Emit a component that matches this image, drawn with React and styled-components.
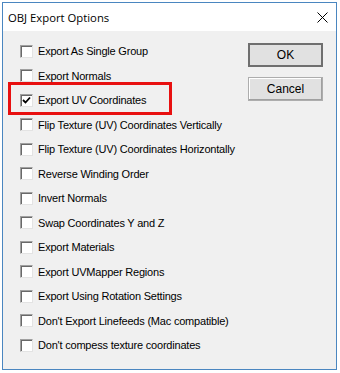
import React from "react";
import styled, { createGlobalStyle } from "styled-components";

const Global = createGlobalStyle`
  html, body { margin: 0; padding: 0; background: #ffffff; }
  body { width: 340px; height: 373px; overflow: hidden; }
`;

const Window = styled.div`
  margin: 2px 0 0 2px;
  width: 333px;
  height: 366px;
  border: 1px solid #4a86c0;
  background: #f0f0f0;
  display: flex;
  flex-direction: column;
`;

const TitleBar = styled.div`
  height: 28px;
  background: #ffffff;
  display: flex;
  align-items: center;
  justify-content: space-between;
  padding: 0 0 0 5px;
  font-family: "Open Sans", "Noto Sans", sans-serif;
  font-size: 11.3px;
  color: #000;
`;

const CloseBtn = styled.div`
  width: 28px;
  height: 28px;
  display: flex;
  align-items: center;
  justify-content: center;
`;

const Body = styled.div`
  flex: 1;
  display: grid;
  grid-template-columns: 1fr 88px;
  padding: 8px 0 0 17px;
  font-family: "Liberation Sans", Arial, sans-serif;
  font-size: 11px;
  color: #000;
`;

const List = styled.div`
  display: flex;
  flex-direction: column;
`;

const Row = styled.label`
  position: relative;
  height: 24.5px;
  display: flex;
  align-items: center;
  gap: 5px;
  letter-spacing: -0.2px;
  white-space: nowrap;
`;

const Box = styled.span`
  box-sizing: border-box;
  width: 13px;
  height: 13px;
  background: #fff;
  border-top: 1px solid #a0a0a0;
  border-left: 1px solid #a0a0a0;
  border-right: 1px solid #e3e3e3;
  border-bottom: 1px solid #e3e3e3;
  box-shadow: inset 1px 1px 0 #696969;
  display: flex;
  align-items: center;
  justify-content: center;
  flex: none;
`;

const Highlight = styled.span`
  position: absolute;
  left: -12px;
  top: -6px;
  width: 158px;
  height: 27px;
  border: 3px solid #e81010;
  pointer-events: none;
`;

const Buttons = styled.div`
  display: flex;
  flex-direction: column;
  gap: 10px;
  padding-top: 4px;
`;

const Button = styled.div`
  box-sizing: border-box;
  width: 75px;
  height: 24px;
  background: #e1e1e1;
  border: ${(p) => (p.$default ? "2px solid #6f6f6f" : "1px solid #adadad")};
  box-shadow: ${(p) => (p.$default ? "none" : "inset -1px -1px 0 #a0a0a0, inset 1px 1px 0 #fff")};
  display: flex;
  align-items: center;
  justify-content: center;
  font-family: "Liberation Sans", Arial, sans-serif;
  font-size: 12px;
`;

const items = [
  "Export As Single Group",
  "Export Normals",
  "Export UV Coordinates",
  "Flip Texture (UV) Coordinates Vertically",
  "Flip Texture (UV) Coordinates Horizontally",
  "Reverse Winding Order",
  "Invert Normals",
  "Swap Coordinates Y and Z",
  "Export Materials",
  "Export UVMapper Regions",
  "Export Using Rotation Settings",
  "Don't Export Linefeeds (Mac compatible)",
  "Don't compess texture coordinates",
];

export default function App() {
  return (
    <>
      <Global />
      <Window>
        <TitleBar>
          <span>OBJ Export Options</span>
          <CloseBtn>
            <svg width="11" height="11" viewBox="0 0 11 11">
              <path d="M0.5 0.5 L10.5 10.5 M10.5 0.5 L0.5 10.5" stroke="#000" strokeWidth="1" />
            </svg>
          </CloseBtn>
        </TitleBar>
        <Body>
          <List>
            {items.map((t, i) => (
              <Row key={t}>
                <Box>
                  {i === 2 && (
                    <svg width="9" height="9" viewBox="0 0 9 9">
                      <path d="M1 4 L3.5 6.5 L8 1.5" stroke="#000" strokeWidth="1.8" fill="none" />
                    </svg>
                  )}
                </Box>
                <span>{t}</span>
                {i === 2 && <Highlight />}
              </Row>
            ))}
          </List>
          <Buttons>
            <Button $default>OK</Button>
            <Button>Cancel</Button>
          </Buttons>
        </Body>
      </Window>
    </>
  );
}
